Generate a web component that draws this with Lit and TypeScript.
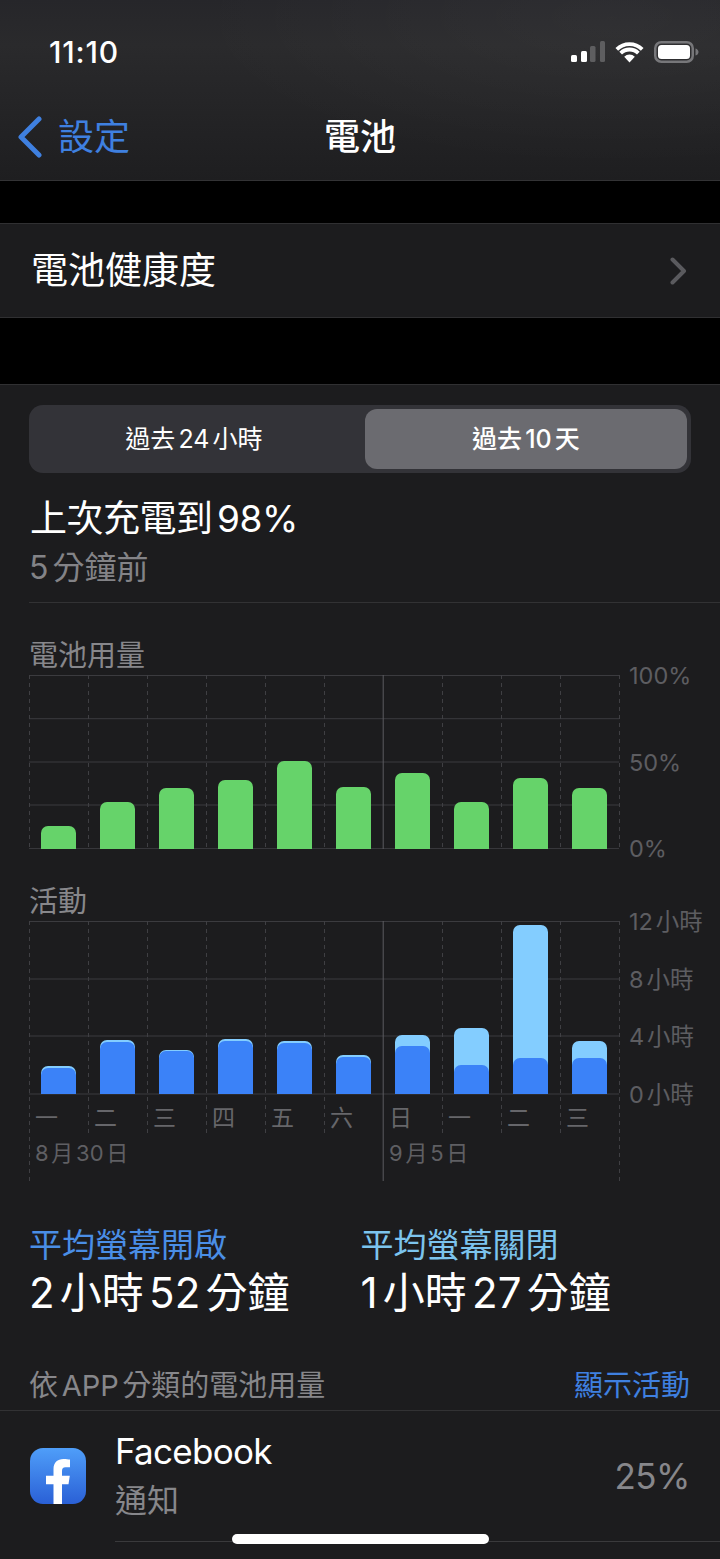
import { LitElement, html, css, svg } from "lit";
import { customElement } from "lit/decorators.js";

const COL = 59;
const green = [22.7, 46.7, 60.7, 69.4, 88.4, 62.4, 76.4, 46.7, 71, 60.7];
const activity = [
  { total: 28, dark: 26.5 },
  { total: 53.7, dark: 52 },
  { total: 44.3, dark: 43 },
  { total: 55.3, dark: 53.5 },
  { total: 53, dark: 51.5 },
  { total: 38.7, dark: 37.5 },
  { total: 59.3, dark: 48 },
  { total: 66.3, dark: 29 },
  { total: 169, dark: 35.7 },
  { total: 53.3, dark: 36.3 },
];
const days = ["一", "二", "三", "四", "五", "六", "日", "一", "二", "三"];

function grid(hLines: number[], height: number, longAt: number[], axis: number) {
  const xs = Array.from({ length: 11 }, (_, i) => i * COL + 0.5);
  return html`<svg class="grid" width="591" height=${height} viewBox="0 0 591 ${height}">
    ${hLines.map((y) => svg`<line x1="0" x2="590" y1=${y} y2=${y} stroke="#3b3b3f" stroke-width="1"></line>`)}
    ${xs.map((x, i) =>
      i === 6
        ? svg`<line x1=${x - 0.3} x2=${x - 0.3} y1="0" y2=${height} stroke="#5c5c60" stroke-width="1"></line>`
        : svg`<line x1=${x} x2=${x} y1="0" y2=${longAt.includes(i) ? height : axis} stroke="#3f3f43" stroke-width="1" stroke-dasharray="4 4"></line>`
    )}
  </svg>`;
}

@customElement("app-root")
export class AppRoot extends LitElement {
  static styles = css`
    :host {
      display: block;
      width: 720px;
      height: 1559px;
      overflow: hidden;
      position: relative;
      background: #000;
      color: #fff;
      font-family: Inter, "Noto Sans CJK TC", sans-serif;
      text-autospace: normal;
    }
    * { box-sizing: border-box; }
    .head {
      height: 181px;
      border-bottom: 1px solid #333335;
      background:
        radial-gradient(420px 150px at 85% 10%, rgba(255,255,255,0.035), transparent),
        linear-gradient(#26262a 0%, #2a2a2c 25%, #1e1e20 100%);
    }
    .status {
      height: 104px;
      display: flex;
      align-items: center;
      justify-content: space-between;
      padding: 0 21px 0 49px;
    }
    .time { font-size: 30px; font-weight: 500; letter-spacing: 0.8px; }
    .status-icons { display: flex; align-items: center; gap: 10px; }
    .nav {
      height: 66px;
      display: grid;
      grid-template-columns: 1fr auto 1fr;
      align-items: center;
      padding: 0 17px;
    }
    .back { display: flex; align-items: center; gap: 16px; color: #3f80e0; font-size: 36px; line-height: 44px; }
    .title { font-size: 36px; font-weight: 500; line-height: 44px; }
    .row-single {
      margin-top: 42px;
      height: 95px;
      background: #1c1c1e;
      border-top: 1px solid #303032;
      border-bottom: 1px solid #303032;
      display: flex;
      align-items: center;
      justify-content: space-between;
      padding: 0 33px 0 31px;
      font-size: 37px;
    }
    .row-single span { margin-top: -6px; }
    .main {
      margin-top: 66px;
      height: 1175px;
      background: #1c1c1e;
      border-top: 1px solid #303032;
      overflow: hidden;
    }
    .seg {
      margin: 20px 29px 0;
      height: 68px;
      border-radius: 14px;
      background: #333338;
      padding: 4px;
      display: grid;
      grid-template-columns: 1fr 1fr;
      gap: 10px;
      font-size: 25px;
    }
    .seg div { display: flex; align-items: center; justify-content: center; border-radius: 12px; padding-bottom: 4px; }
    .seg .on { background: #6b6b70; font-weight: 500; }
    .h1 { margin: 24px 0 0 30px; font-size: 37px; line-height: 44px; letter-spacing: -0.5px; }
    .sub { margin: 7px 0 0 29px; font-size: 32px; line-height: 40px; color: #838387; }
    .sep { margin: 14px 0 0 29px; height: 1px; background: #323234; }
    .cap { margin: 35px 0 -1px 29px; font-size: 29px; line-height: 36px; color: #87878b; }
    .chart { display: flex; height: 174px; margin: 2px 0 0 29px; }
    .plot { position: relative; width: 590px; height: 174px; display: grid; grid-template-columns: repeat(10, 59px); align-items: end; }
    .grid { position: absolute; left: 0; top: 0; }
    .slot { position: relative; display: flex; justify-content: center; align-items: flex-end; height: 100%; }
    .slot.raised { padding-bottom: 1px; }
    .bar { width: 35.5px; border-radius: 7px 7px 0 0; overflow: hidden; display: flex; align-items: flex-end; }
    .bar.green { background: #66d36a; }
    .bar.light { background: #83cdff; }
    .dark { width: 100%; background: #3b82f8; border-radius: 7px 7px 0 0; }
    .y {
      margin: -14px 0 0 10px;
      display: flex;
      flex-direction: column;
      justify-content: space-between;
      font-size: 23.5px;
      line-height: 30px;
      color: #5d5d61;
      height: 203px;
    }
    .y span { display: block; white-space: nowrap; }
    .labels { display: grid; grid-template-columns: repeat(10, 59px); margin: 8px 0 0 29px; font-size: 23px; line-height: 30px; color: #66666a; position: relative; }
    .labels span { padding-left: 6px; }
    .dates { display: grid; grid-template-columns: repeat(10, 59px); margin: 5px 0 0 29px; font-size: 22px; line-height: 30px; color: #5f5f63; position: relative; white-space: nowrap; }
    .dates .a { grid-column: 1 / span 6; padding-left: 6px; }
    .dates .b { grid-column: 7 / span 4; padding-left: 6px; }
    .stats { margin: 57px 0 0 29px; display: grid; grid-template-columns: 331.5px 331px; }
    .stat-l { font-size: 33px; line-height: 40px; }
    .stat-l.on { color: #4a8ee6; }
    .stat-l.off { color: #7cc4ee; }
    .stat-v { margin-top: 4px; font-size: 42px; line-height: 48px; }
    .sec { margin: 51px 30px 0 29px; display: flex; justify-content: space-between; font-size: 29px; line-height: 36px; color: #87878b; }
    .sec a { color: #3f80e0; }
    .app { margin-top: 6px; border-top: 1px solid #323234; padding-left: 30px; display: flex; align-items: center; height: 131px; }
    .app-icon { flex: none; width: 56px; height: 56px; margin-right: 29px; }
    .app-body { flex: 1; height: 131px; border-bottom: 1px solid #3a3a3c; display: flex; align-items: center; justify-content: space-between; padding-right: 30px; }
    .app-text { padding-bottom: 2px; }
    .app-name { font-size: 35px; line-height: 44px; letter-spacing: -0.7px; }
    .app-sub { margin-top: 8px; font-size: 32px; line-height: 40px; color: #87878b; }
    .pct { font-size: 35px; color: #87878b; letter-spacing: -0.5px; }
    .home { position: absolute; left: 232px; top: 1534px; width: 257px; height: 10px; border-radius: 5px; background: #fff; }
  `;

  render() {
    return html`
      <div class="head">
        <div class="status">
          <span class="time">11:10</span>
          <div class="status-icons">
            <svg width="34" height="22" viewBox="0 0 34 22">
              <rect x="0" y="14" width="6" height="7" rx="1.5" fill="#fff"></rect>
              <rect x="10" y="10" width="6" height="11" rx="1.5" fill="#fff"></rect>
              <rect x="19" y="5" width="5.5" height="16" rx="1.5" fill="#5e5e60"></rect>
              <rect x="29" y="0" width="5" height="21" rx="1.5" fill="#5e5e60"></rect>
            </svg>
            <svg width="29" height="22" viewBox="0 0 29 22">
              <path d="M14.5 21.5 L9.2 15.8 A7.5 7.5 0 0 1 19.8 15.8 Z" fill="#fff"></path>
              <path d="M5.66 12.16 A12.5 12.5 0 0 1 23.34 12.16" fill="none" stroke="#fff" stroke-width="3.8"></path>
              <path d="M1.8 8.3 A18 18 0 0 1 27.2 8.3" fill="none" stroke="#fff" stroke-width="3.8"></path>
            </svg>
            <svg width="45" height="22" viewBox="0 0 45 22">
              <rect x="1.25" y="1.25" width="37.5" height="19.5" rx="6" fill="none" stroke="#77777a" stroke-width="2.5"></rect>
              <rect x="4" y="4" width="32" height="14" rx="3.5" fill="#fff"></rect>
              <path d="M41.5 7.5 C43.5 8 44.5 9.5 44.5 11 C44.5 12.5 43.5 14 41.5 14.5 Z" fill="#77777a"></path>
            </svg>
          </div>
        </div>
        <div class="nav">
          <div class="back">
            <svg width="25" height="42" viewBox="0 0 25 42">
              <path d="M22 3 L4 21 L22 39" fill="none" stroke="#3f80e0" stroke-width="5" stroke-linecap="round" stroke-linejoin="round"></path>
            </svg>
            <span>設定</span>
          </div>
          <div class="title">電池</div>
          <div></div>
        </div>
      </div>

      <div class="row-single">
        <span>電池健康度</span>
        <svg width="17" height="28" viewBox="0 0 17 28">
          <path d="M2.5 2.5 L14 14 L2.5 25.5" fill="none" stroke="#5a5a5e" stroke-width="4" stroke-linecap="round" stroke-linejoin="round"></path>
        </svg>
      </div>

      <div class="main">
        <div class="seg">
          <div>過去24小時</div>
          <div class="on">過去10天</div>
        </div>
        <div class="h1">上次充電到98%</div>
        <div class="sub">5分鐘前</div>
        <div class="sep"></div>

        <div class="cap">電池用量</div>
        <div class="chart">
          <div class="plot">
            ${grid([0.5, 43.7, 87, 130, 173.6], 174, [0, 1, 2, 3, 4, 5, 7, 8, 9, 10], 174)}
            ${green.map((h) => html`<div class="slot"><div class="bar green" style="height:${h}px"></div></div>`)}
          </div>
          <div class="y"><span>100%</span><span>50%</span><span>0%</span></div>
        </div>

        <div class="cap">活動</div>
        <div class="chart">
          <div class="plot">
            ${grid([0.5, 58, 115, 173], 260, [0, 10], 216)}
            ${activity.map(
              (a) => html`<div class="slot raised"><div class="bar light" style="height:${a.total}px"><div class="dark" style="height:${a.dark}px"></div></div></div>`
            )}
          </div>
          <div class="y"><span>12小時</span><span>8小時</span><span>4小時</span><span>0小時</span></div>
        </div>
        <div class="labels">${days.map((d) => html`<span>${d}</span>`)}</div>
        <div class="dates"><span class="a">8月30日</span><span class="b">9月5日</span></div>

        <div class="stats">
          <div>
            <div class="stat-l on">平均螢幕開啟</div>
            <div class="stat-v">2小時52分鐘</div>
          </div>
          <div>
            <div class="stat-l off">平均螢幕關閉</div>
            <div class="stat-v">1小時27分鐘</div>
          </div>
        </div>

        <div class="sec"><span>依APP分類的電池用量</span><a>顯示活動</a></div>
        <div class="app">
          <svg class="app-icon" viewBox="0 0 56 56">
            <defs>
              <linearGradient id="fb" x1="0" y1="0" x2="0" y2="1">
                <stop offset="0" stop-color="#4f9ef9"></stop>
                <stop offset="1" stop-color="#2a60d6"></stop>
              </linearGradient>
            </defs>
            <rect width="56" height="56" rx="13" fill="url(#fb)"></rect>
            <path d="M23.5 56 V36.3 H16 V27.7 H23.5 V21 C23.5 14.5 27.5 11 33.5 11 C36 11 38.7 11.3 40 11.6 V19.3 H35.5 C32.8 19.3 32 20.8 32 23 V27.7 H39.8 L38.5 36.3 H32 V56 Z" fill="#fff"></path>
          </svg>
          <div class="app-body">
            <div class="app-text">
              <div class="app-name">Facebook</div>
              <div class="app-sub">通知</div>
            </div>
            <div class="pct">25%</div>
          </div>
        </div>
      </div>
      <div class="home"></div>
    `;
  }
}
